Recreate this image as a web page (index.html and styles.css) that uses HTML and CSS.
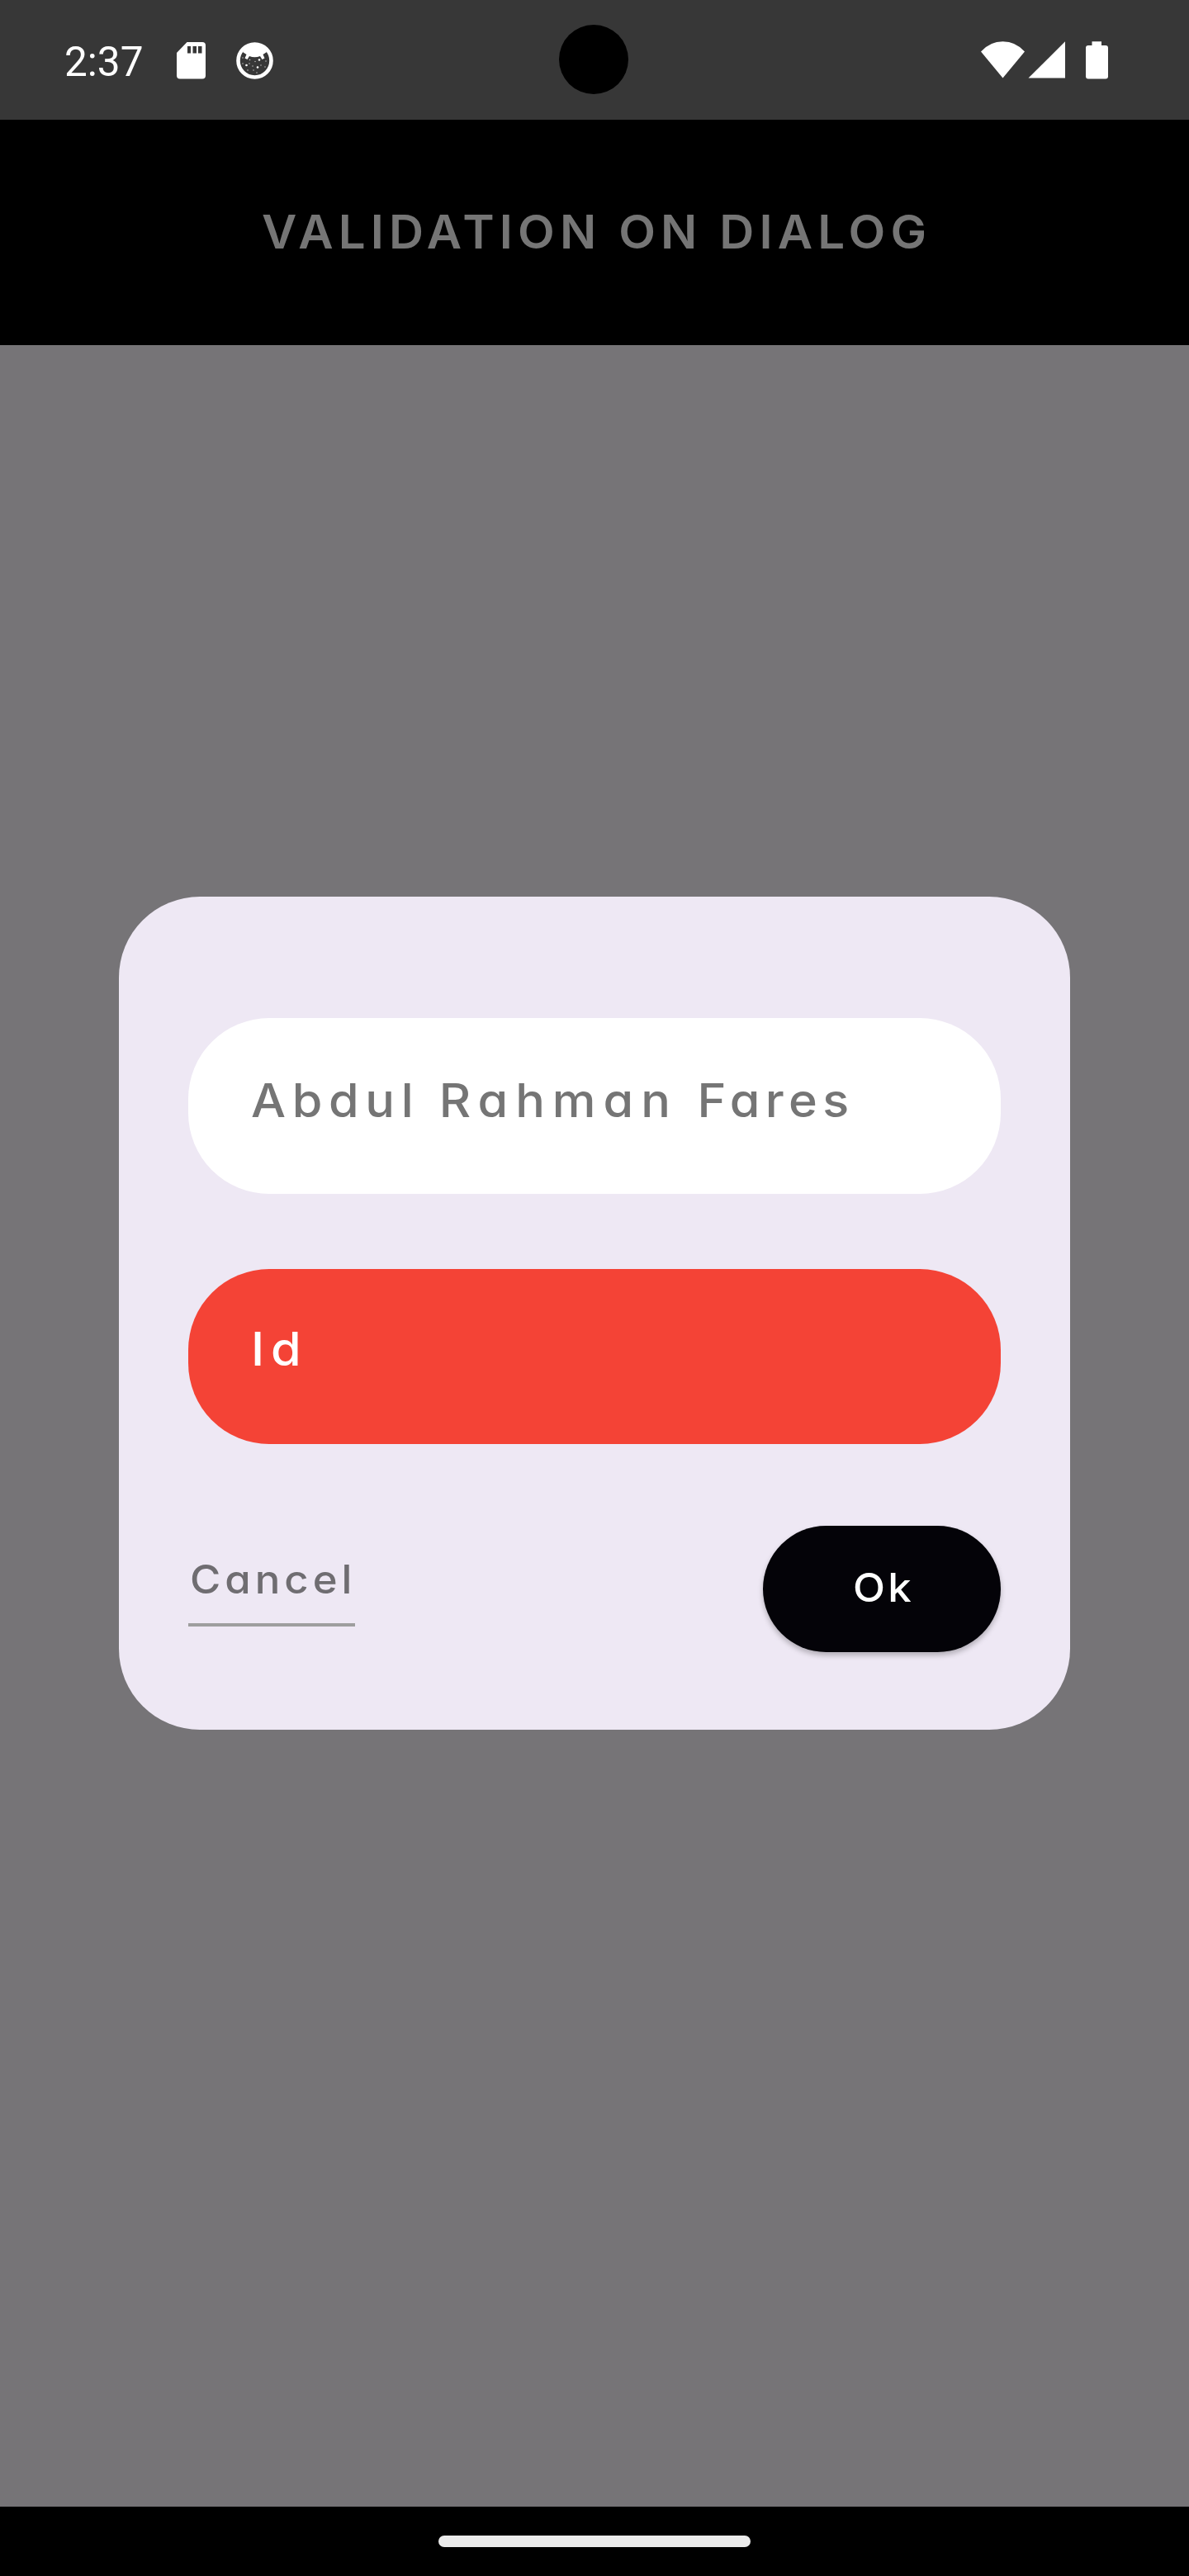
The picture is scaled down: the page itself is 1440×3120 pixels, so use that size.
FILE: index.html
```html
<!DOCTYPE html>
<html lang="en">
<head>
<meta charset="utf-8">
<title>Validation on dialog</title>
<link rel="stylesheet" href="styles.css">
</head>
<body>
<div class="screen">
  <header class="status">
    <div class="status-left">
      <span class="clock">2:37</span>
      <svg class="sd" viewBox="0 0 35 45" width="35" height="45"><path fill="#fff" fill-rule="evenodd" d="M12.500 0H31a4 4 0 0 1 4 4V40.500a4 4 0 0 1-4 4H4a4 4 0 0 1-4-4V13ZM13 5v8.500h4V5ZM19.500 5v8.500h4.500V5ZM26 5v8.500h4.500V5Z"/></svg>
      <svg class="cat" viewBox="0 0 45 45" width="45" height="45">
        <circle cx="22.500" cy="22.500" r="20" fill="none" stroke="#fff" stroke-width="4.600"/>
        <path fill="#fff" d="M8 12Q13 3 22.500 2Q32 3 37 12L32.500 15L34.500 19.500L31.500 21L29 17Q22.500 19.500 16 17L13.500 21L10.500 19.500L12.500 15Z"/>
        <g fill="#fff"><circle cx="28" cy="21.500" r="1.300"/><circle cx="12.500" cy="28" r="1.300"/><circle cx="26" cy="30.500" r="1.300"/></g>
        <g fill="#ccc"><circle cx="16.500" cy="21.500" r=".8"/><circle cx="8" cy="19" r=".7"/><circle cx="23" cy="23.500" r=".7"/><circle cx="8" cy="26" r=".7"/><circle cx="16" cy="26" r=".7"/><circle cx="20" cy="29" r=".7"/><circle cx="30" cy="28" r=".7"/><circle cx="35" cy="30" r=".7"/><circle cx="36" cy="23" r=".7"/><circle cx="14" cy="34" r=".7"/><circle cx="21" cy="34" r=".7"/><circle cx="25" cy="37" r=".7"/></g>
      </svg>
    </div>
    <div class="camera"></div>
    <svg class="signals" viewBox="0 0 154 46" width="154" height="46" fill="#fff"><path d="M0 12.500Q11 .3 26.500 .3T53 12.500L26.500 44.500Z"/><path d="M57.500 44.500H102V.3Z"/><path d="M134.500 .3H146V5h5a3 3 0 0 1 3 3V42.500a3 3 0 0 1-3 3H130a3 3 0 0 1-3-3V8a3 3 0 0 1 3-3h4.500Z"/></svg>
  </header>
  <div class="appbar"><h1 class="title">VALIDATION ON DIALOG</h1></div>
  <main class="backdrop">
    <section class="dialog">
      <div class="field"><span class="wide name">Abdul <span class="middle">Rahman</span> <span class="last">Fares</span></span></div>
      <div class="field error"><span class="wide id">Id</span></div>
      <div class="actions">
        <a class="cancel"><span class="wide">Cancel</span></a>
        <button class="ok"><span class="wide">Ok</span></button>
      </div>
    </section>
  </main>
  <footer class="nav"><div class="handle"></div></footer>
</div>
</body>
</html>
```
FILE: styles.css
```css
* { box-sizing: border-box; }
body { margin: 0; font-family: Inter, "Liberation Sans", sans-serif; font-feature-settings: "cv11"; }
svg { display: block; flex: none; }
.screen { width: 1440px; height: 3120px; display: flex; flex-direction: column; background: #000; }
.status { position: relative; height: 145px; background: #373737; display: flex; justify-content: space-between; padding: 0 98px 0 78px; }
.status-left { display: flex; align-items: flex-start; padding-top: 51px; }
.clock { width: 136px; padding-top: 2px; font: 400 49.500px/45px Roboto, sans-serif; color: #fff; }
.cat { margin-left: 37px; }
.camera { position: absolute; left: 677px; top: 30px; width: 84px; height: 84px; border-radius: 50%; background: #000; }
.signals { margin-top: 50px; }
.appbar { height: 273px; background: #000; display: flex; padding: 96px 0 0 317px; }
.title { margin: 0; font-size: 56px; line-height: 80px; font-weight: 600; letter-spacing: 5.900px; color: #757575; white-space: nowrap; transform: scaleX(1.04); transform-origin: 0 50%; }
.wide { display: inline-block; transform: scaleX(1.06); transform-origin: 0 50%; }
.backdrop { height: 2618px; background: #767477; padding: 668px 144px 0; }
.dialog { width: 1152px; height: 1008.500px; border-radius: 98px; background: #eee8f4; padding: 147.300px 84px 0; display: flex; flex-direction: column; }
.field { height: 212.700px; border-radius: 98px; background: #fff; padding: 60px 76px 0; font-size: 56px; line-height: 80px; font-weight: 500; color: #757575; white-space: nowrap; }
.error { margin-top: 90.800px; background: #f44336; color: #fff; padding-top: 57px; }
.name { letter-spacing: 7.200px; }
.middle { letter-spacing: 8.500px; }
.last { letter-spacing: 6px; }
.id { letter-spacing: 7.500px; }
.actions { margin-top: 98.700px; display: flex; justify-content: space-between; align-items: flex-start; }
.cancel { width: 202px; height: 122px; border-bottom: 4px solid #9e9e9e; padding: 30px 0 0 2px; font-size: 48px; line-height: 70px; font-weight: 500; letter-spacing: 4.700px; color: #6f6d71; white-space: nowrap; }
.ok { width: 288.500px; height: 152.500px; border: 0; border-radius: 77px; background: #040308; color: #fff; box-shadow: 0 4px 6px rgba(0,0,0,.25); font: inherit; font-size: 48px; line-height: 70px; font-weight: 500; letter-spacing: 3px; padding: 0 0 3px; }
.nav { height: 84px; background: #000; display: flex; justify-content: center; padding-top: 35px; }
.handle { width: 378px; height: 14px; border-radius: 7px; background: #ebebeb; }
```
